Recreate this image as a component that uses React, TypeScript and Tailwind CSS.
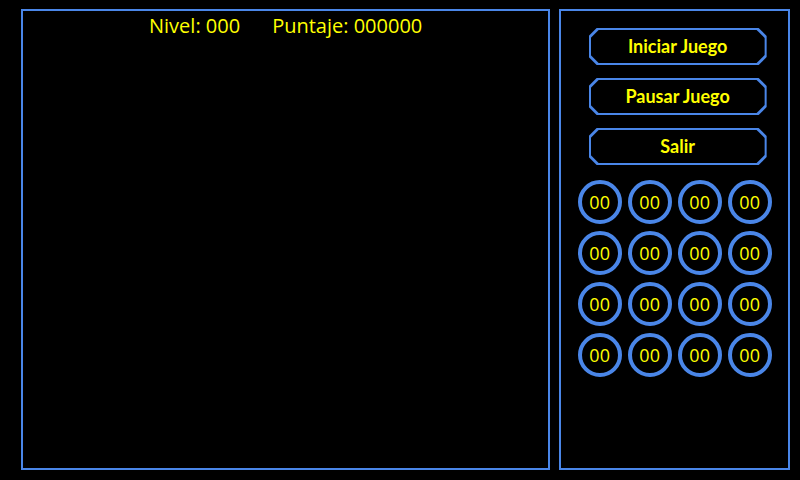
const BLUE = 'bg-[#4a86e8]';

const buttons = ['Iniciar Juego', 'Pausar Juego', 'Salir'];

const chamfer =
    '[clip-path:polygon(8px_0,calc(100%-8px)_0,100%_8px,100%_calc(100%-8px),calc(100%-8px)_100%,8px_100%,0_calc(100%-8px),0_8px)]';

function GameButton({ label }: { label: string }) {
    return (
        <button className={`${BLUE} ${chamfer} h-[37px] w-[178px] p-[2px]`}>
            <div
                className={`${chamfer} flex h-full w-full items-center justify-center bg-black text-[18px] font-bold text-[#ffff00]`}
                style={{ fontFamily: 'Lato, sans-serif' }}
            >
                {label}
            </div>
        </button>
    );
}

export default function App() {
    return (
        <div className="flex h-[480px] w-[800px] gap-[9px] bg-black pb-[10px] pl-[21px] pr-[10px] pt-[9px]">
            <div className="h-[461px] w-[530px] border-2 border-[#4a86e8]">
                <div
                    className="flex justify-center gap-[32px] pt-[2px] text-[20px] leading-[26px] text-[#ffff00]"
                    style={{ fontFamily: '"Open Sans", sans-serif' }}
                >
                    <span>Nivel: 000</span>
                    <span>Puntaje: 000000</span>
                </div>
            </div>

            <div className="flex h-[461px] w-[231px] flex-col items-center border-2 border-[#4a86e8] pt-[17px]">
                <div className="ml-[6px] flex flex-col gap-[13px]">
                    {buttons.map((b) => (
                        <GameButton key={b} label={b} />
                    ))}
                </div>

                <div className="mt-[15px] grid grid-cols-4 gap-x-[6px] gap-y-[7px]">
                    {Array.from({ length: 16 }).map((_, i) => (
                        <div
                            key={i}
                            className="flex h-[44px] w-[44px] items-center justify-center rounded-full border-4 border-[#4a86e8] text-[18px] text-[#ffff00]"
                            style={{ fontFamily: '"Open Sans", sans-serif' }}
                        >
                            00
                        </div>
                    ))}
                </div>
            </div>
        </div>
    );
}
